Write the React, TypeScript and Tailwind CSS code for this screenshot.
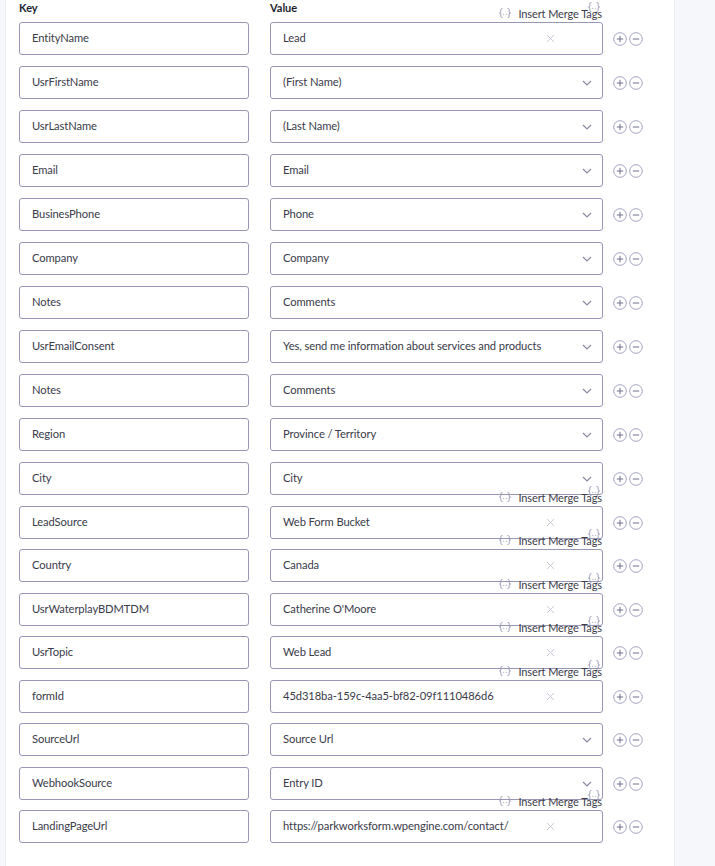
import React from 'react'

type Row = { k: string; v: string; kind: 'text' | 'select' }

const rows: Row[] = [
  { k: 'EntityName', v: 'Lead', kind: 'text' },
  { k: 'UsrFirstName', v: '(First Name)', kind: 'select' },
  { k: 'UsrLastName', v: '(Last Name)', kind: 'select' },
  { k: 'Email', v: 'Email', kind: 'select' },
  { k: 'BusinesPhone', v: 'Phone', kind: 'select' },
  { k: 'Company', v: 'Company', kind: 'select' },
  { k: 'Notes', v: 'Comments', kind: 'select' },
  { k: 'UsrEmailConsent', v: 'Yes, send me information about services and products', kind: 'select' },
  { k: 'Notes', v: 'Comments', kind: 'select' },
  { k: 'Region', v: 'Province / Territory', kind: 'select' },
  { k: 'City', v: 'City', kind: 'select' },
  { k: 'LeadSource', v: 'Web Form Bucket', kind: 'text' },
  { k: 'Country', v: 'Canada', kind: 'text' },
  { k: 'UsrWaterplayBDMTDM', v: "Catherine O'Moore", kind: 'text' },
  { k: 'UsrTopic', v: 'Web Lead', kind: 'text' },
  { k: 'formId', v: '45d318ba-159c-4aa5-bf82-09f1110486d6', kind: 'text' },
  { k: 'SourceUrl', v: 'Source Url', kind: 'select' },
  { k: 'WebhookSource', v: 'Entry ID', kind: 'select' },
  { k: 'LandingPageUrl', v: 'https://parkworksform.wpengine.com/contact/', kind: 'text' },
]

function MergeIcon({ className }: { className?: string }) {
  return (
    <svg viewBox="0 0 14 12" className={className} fill="none" stroke="currentColor" strokeWidth="1" strokeLinecap="round">
      <path d="M4 1.5 C2.8 1.5 2.8 2.2 2.8 3.5 V4.8 C2.8 5.6 2.3 6 1.5 6 C2.3 6 2.8 6.4 2.8 7.2 V8.5 C2.8 9.8 2.8 10.5 4 10.5" />
      <path d="M10 1.5 C11.2 1.5 11.2 2.2 11.2 3.5 V4.8 C11.2 5.6 11.7 6 12.5 6 C11.7 6 11.2 6.4 11.2 7.2 V8.5 C11.2 9.8 11.2 10.5 10 10.5" />
      <circle cx="5.7" cy="7.2" r="0.55" fill="currentColor" stroke="none" />
      <circle cx="8.3" cy="7.2" r="0.55" fill="currentColor" stroke="none" />
    </svg>
  )
}

function MergeTags() {
  return (
    <div className="absolute right-0 top-[-16px] flex items-center gap-[6px] text-[11px] leading-none text-[#3c3c4a]">
      <MergeIcon className="h-[12px] w-[14px] text-[#9a99b8]" />
      <span>Insert Merge Tags</span>
      <MergeIcon className="absolute right-[1px] top-[-6px] h-[12px] w-[14px] text-[#9a99b8]" />
    </div>
  )
}

function Chevron() {
  return (
    <svg viewBox="0 0 10 6" className="h-[6px] w-[10px] text-[#8a89a8]" fill="none" stroke="currentColor" strokeWidth="1.2">
      <path d="M1 1l4 4 4-4" />
    </svg>
  )
}

function Cross() {
  return (
    <svg viewBox="0 0 10 10" className="h-[9px] w-[9px] text-[#c9c9d9]" fill="none" stroke="currentColor" strokeWidth="1.1">
      <path d="M1 1l8 8M9 1l-8 8" />
    </svg>
  )
}

function CircleBtn({ minus }: { minus?: boolean }) {
  return (
    <svg viewBox="0 0 14 14" className="h-[14px] w-[14px] text-[#a3a2c2]" fill="none" stroke="currentColor" strokeWidth="1">
      <circle cx="7" cy="7" r="6.3" />
      <path d="M3.8 7h6.4" stroke="#6f6e8f" />
      {!minus && <path d="M7 3.8v6.4" stroke="#6f6e8f" />}
    </svg>
  )
}

export default function App() {
  return (
    <div className="flex min-h-[866px] w-[715px] font-['Lato',sans-serif] text-[#3a3b4a]">
      <div className="w-[6px] border-r border-[#eceff5] bg-[#f5f7fb]" />
      <div className="w-[668px] bg-white pl-[13px]">
        <div className="flex h-[22px] items-start text-[11px] font-bold text-[#1e1f2e]">
          <div className="w-[251px]">Key</div>
          <div>Value</div>
        </div>
        <div className="flex flex-col">
          {rows.map((r, i) => (
            <div
              key={i}
              className={`flex items-center ${i === 0 ? '' : i > 11 && i % 2 === 0 ? 'mt-[10px]' : 'mt-[11px]'}`}
            >
              <div className="flex h-[33px] w-[230px] items-center rounded-[3px] border border-[#9896b6] px-[12px] pb-[1px] text-[11.2px] tracking-[-0.1px]">
                {r.k}
              </div>
              <div className="relative ml-[21px] flex h-[33px] w-[333px] items-center rounded-[3px] border border-[#9896b6] pb-[1px] pl-[12px] pr-[9px] text-[11.2px] tracking-[-0.1px]">
                <span className="min-w-0 flex-1 whitespace-nowrap">{r.v}</span>
                {r.kind === 'select' ? (
                  <span className="absolute right-[10px] top-[13px] flex items-center">
                    <Chevron />
                  </span>
                ) : (
                  <span className="absolute right-[47px] top-[11px] flex items-center">
                    <Cross />
                  </span>
                )}
                {r.kind === 'text' && <MergeTags />}
              </div>
              <div className="ml-[10px] flex items-center gap-[2px]">
                <CircleBtn />
                <CircleBtn minus />
              </div>
            </div>
          ))}
        </div>
      </div>
      <div className="flex-1 border-l border-[#e8ebf2] bg-[#f5f7fb]" />
    </div>
  )
}
